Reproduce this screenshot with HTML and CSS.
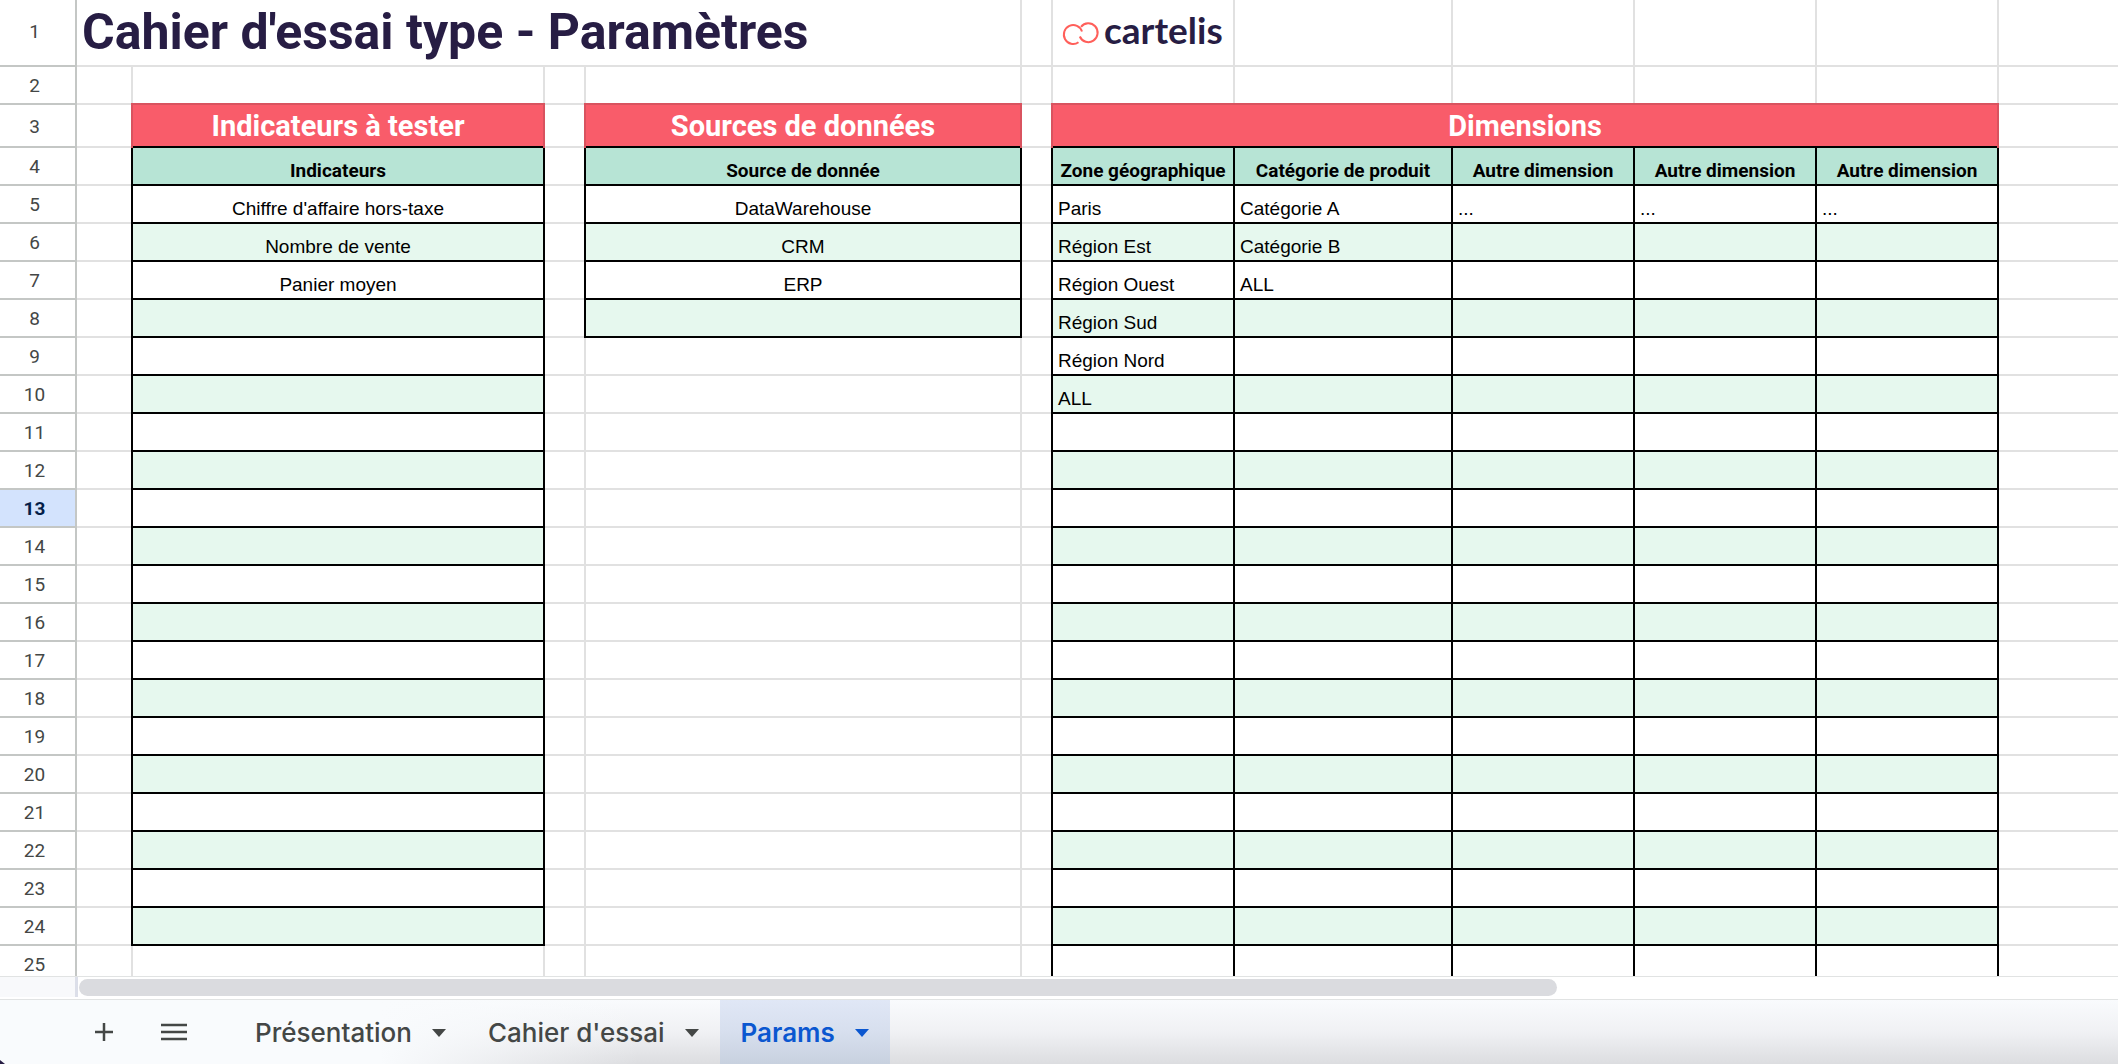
FILE: index.html
```html
<!DOCTYPE html>
<html lang="fr">
<head>
<meta charset="utf-8">
<title>Cahier d'essai type - Paramètres</title>
<link rel="stylesheet" href="styles.css">
</head>
<body>
<main class="sheet">
<table class="grid">
<colgroup>
<col class="w-num"><col class="w-a"><col class="w-b"><col class="w-c"><col class="w-d"><col class="w-e">
<col class="w-dim"><col class="w-cat"><col class="w-dim"><col class="w-dim"><col class="w-dim"><col>
</colgroup>
<tbody class="top">
<tr class="row-title"><th>1</th><td class="title" colspan="4">Cahier d'essai type - Paramètres</td><td></td>
<td class="logo-cell"><svg class="logo" viewBox="0 -3 168 48" role="img" aria-label="cartelis"><g fill="none" stroke="#ff5f5a" stroke-width="2"><path d="M16.500 30.300 A9.300 9.500 0 1 1 20 19.500"/><path d="M19 14.800 A9.300 9.500 0 1 1 17.800 24.500"/></g><text class="logo-text" x="42" y="32">cartelis</text></svg></td>
<td></td><td></td><td></td><td></td><td></td></tr>
<tr><th>2</th><td></td><td></td><td></td><td></td><td></td><td></td><td></td><td></td><td></td><td></td><td></td></tr>
<tr class="row-band"><th>3</th><td></td><td class="band">Indicateurs à tester</td><td></td><td class="band">Sources de données</td><td></td><td class="band" colspan="5">Dimensions</td><td></td></tr>
<tr class="row-head"><th>4</th><td></td><td>Indicateurs</td><td></td><td>Source de donnée</td><td></td><td>Zone géographique</td><td>Catégorie de produit</td><td>Autre dimension</td><td>Autre dimension</td><td>Autre dimension</td><td></td></tr>
</tbody>
<tbody class="data">
<tr><th>5</th><td></td><td>Chiffre d'affaire hors-taxe</td><td></td><td>DataWarehouse</td><td></td><td>Paris</td><td>Catégorie A</td><td>...</td><td>...</td><td>...</td><td></td></tr>
<tr><th>6</th><td></td><td>Nombre de vente</td><td></td><td>CRM</td><td></td><td>Région Est</td><td>Catégorie B</td><td></td><td></td><td></td><td></td></tr>
<tr><th>7</th><td></td><td>Panier moyen</td><td></td><td>ERP</td><td></td><td>Région Ouest</td><td>ALL</td><td></td><td></td><td></td><td></td></tr>
<tr><th>8</th><td></td><td></td><td></td><td></td><td></td><td>Région Sud</td><td></td><td></td><td></td><td></td><td></td></tr>
<tr><th>9</th><td></td><td></td><td></td><td></td><td></td><td>Région Nord</td><td></td><td></td><td></td><td></td><td></td></tr>
<tr><th>10</th><td></td><td></td><td></td><td></td><td></td><td>ALL</td><td></td><td></td><td></td><td></td><td></td></tr>
<tr><th>11</th><td></td><td></td><td></td><td></td><td></td><td></td><td></td><td></td><td></td><td></td><td></td></tr>
<tr><th>12</th><td></td><td></td><td></td><td></td><td></td><td></td><td></td><td></td><td></td><td></td><td></td></tr>
<tr><th class="current">13</th><td></td><td></td><td></td><td></td><td></td><td></td><td></td><td></td><td></td><td></td><td></td></tr>
<tr><th>14</th><td></td><td></td><td></td><td></td><td></td><td></td><td></td><td></td><td></td><td></td><td></td></tr>
<tr><th>15</th><td></td><td></td><td></td><td></td><td></td><td></td><td></td><td></td><td></td><td></td><td></td></tr>
<tr><th>16</th><td></td><td></td><td></td><td></td><td></td><td></td><td></td><td></td><td></td><td></td><td></td></tr>
<tr><th>17</th><td></td><td></td><td></td><td></td><td></td><td></td><td></td><td></td><td></td><td></td><td></td></tr>
<tr><th>18</th><td></td><td></td><td></td><td></td><td></td><td></td><td></td><td></td><td></td><td></td><td></td></tr>
<tr><th>19</th><td></td><td></td><td></td><td></td><td></td><td></td><td></td><td></td><td></td><td></td><td></td></tr>
<tr><th>20</th><td></td><td></td><td></td><td></td><td></td><td></td><td></td><td></td><td></td><td></td><td></td></tr>
<tr><th>21</th><td></td><td></td><td></td><td></td><td></td><td></td><td></td><td></td><td></td><td></td><td></td></tr>
<tr><th>22</th><td></td><td></td><td></td><td></td><td></td><td></td><td></td><td></td><td></td><td></td><td></td></tr>
<tr><th>23</th><td></td><td></td><td></td><td></td><td></td><td></td><td></td><td></td><td></td><td></td><td></td></tr>
<tr><th>24</th><td></td><td></td><td></td><td></td><td></td><td></td><td></td><td></td><td></td><td></td><td></td></tr>
<tr><th>25</th><td></td><td></td><td></td><td></td><td></td><td></td><td></td><td></td><td></td><td></td><td></td></tr>
</tbody>
</table>
</main>
<div class="scroll"><div class="scroll-corner"></div><div class="scroll-track"><div class="scroll-thumb"></div></div></div>
<footer class="tabs">
<button class="icon-btn" aria-label="Ajouter une feuille"><svg width="20" height="20" viewBox="0 0 20 20"><path d="M10 1V19M1 10H19" stroke="currentColor" stroke-width="2.500" fill="none"/></svg></button>
<button class="icon-btn menu" aria-label="Toutes les feuilles"><svg width="26" height="18" viewBox="0 0 26 18"><path d="M0 2H26M0 9H26M0 16H26" stroke="currentColor" stroke-width="2.500" fill="none"/></svg></button>
<button class="tab">Présentation<svg width="14" height="8" viewBox="0 0 14 8"><path d="M0 0H14L7 8Z" fill="currentColor"/></svg></button>
<button class="tab">Cahier d'essai<svg width="14" height="8" viewBox="0 0 14 8"><path d="M0 0H14L7 8Z" fill="currentColor"/></svg></button>
<button class="tab active">Params<svg width="14" height="8" viewBox="0 0 14 8"><path d="M0 0H14L7 8Z" fill="currentColor"/></svg></button>
</footer>
</body>
</html>
```
FILE: styles.css
```css
* { box-sizing: border-box; }

body {
  margin: 0;
  height: 100vh;
  display: flex;
  flex-direction: column;
  overflow: hidden;
  background: #fff;
  color: #000;
  font-family: "Liberation Sans", Arial, sans-serif;
}

.sheet { flex: 1; min-height: 0; overflow: hidden; }

.grid {
  width: 100%;
  table-layout: fixed;
  border-collapse: separate;
  border-spacing: 0;
}

.w-num { width: 77px; }
.w-a { width: 56px; }
.w-b { width: 412px; }
.w-c { width: 41px; }
.w-d { width: 436px; }
.w-e { width: 31px; }
.w-dim { width: 182px; }
.w-cat { width: 218px; }

.grid tr { height: 38px; }
.grid .row-title { height: 67px; }
.grid .row-band { height: 43px; }

/* Vertical lines are borders, horizontal lines are inset shadows,
   so that lines of two colours meet without a mitred corner */
.grid th,
.grid td {
  padding: 0;
  border: 0 solid #e1e1e1;
  border-right-width: 2px;
  box-shadow: inset 0 -2px #e1e1e1;
  white-space: nowrap;
}

.grid th {
  padding: 0 6px 0 0;
  border-color: #c4c7c5;
  box-shadow: inset 0 -2px #c4c7c5;
  color: #444746;
  font: 400 19px/22px Roboto, sans-serif;
  text-align: center;
  vertical-align: middle;
}

.grid th.current { background: #d3e3fd; color: #041e49; font-weight: 700; }

.grid .row-title th { padding-bottom: 4px; }

.grid td {
  padding: 0 5px 4px;
  font-size: 19px;
  line-height: 22px;
  vertical-align: bottom;
}

.grid td:last-child { border-right: 0; }

.grid .title {
  padding: 0 5px 3px;
  color: #271d44;
  font: 700 50px/60px Roboto, sans-serif;
  vertical-align: middle;
}

.grid .logo-cell { padding: 0 0 2px 9px; vertical-align: middle; }
.logo { display: block; width: 168px; height: 48px; overflow: visible; }
.logo-text { font: 700 37px Lato, sans-serif; fill: #271d44; }

.grid .band {
  padding: 0 0 2px;
  background: #f95c6a;
  border-color: #d9535f;
  box-shadow:
    inset 0 -2px #000,
    0 -2px #d9535f,
    -2px 0 #d9535f,
    -2px -2px #d9535f;
  color: #fff;
  font: 700 29px/34px Roboto, sans-serif;
  text-align: center;
  vertical-align: middle;
}

/* Framed cells: column B, column D and the five dimension columns */
.row-head td:nth-child(n+2):nth-child(-n+11) { border-right-color: #000; }
.row-head td:nth-child(3),
.row-head td:nth-child(5),
.row-head td:nth-child(n+7):nth-child(-n+11) {
  padding: 0 0 4px;
  background: #b7e4d5;
  box-shadow: inset 0 -2px #000;
  font: 700 19px/22px Roboto, sans-serif;
  text-align: center;
}

.data td:nth-child(3),
.data td:nth-child(5) { text-align: center; }

.data tr:nth-child(-n+20) td:nth-child(2),
.data tr:nth-child(-n+20) td:nth-child(3),
.data tr:nth-child(-n+4) td:nth-child(4),
.data tr:nth-child(-n+4) td:nth-child(5),
.data td:nth-child(n+6):nth-child(-n+11) { border-right-color: #000; }

.data tr:nth-child(-n+20) td:nth-child(3),
.data tr:nth-child(-n+4) td:nth-child(5),
.data td:nth-child(n+7):nth-child(-n+11) { box-shadow: inset 0 -2px #000; }

.data tr:nth-child(even) td:nth-child(3),
.data tr:nth-child(even):nth-child(-n+4) td:nth-child(5),
.data tr:nth-child(even) td:nth-child(n+7):nth-child(-n+11) { background: #e6f8ee; }

.scroll {
  display: flex;
  height: 24px;
  border: solid #e1e3e3;
  border-width: 1px 0;
}
.scroll-corner { width: 78px; margin-bottom: 2px; background: #f8f9fb; border-right: 3px solid #dcdfe9; }
.scroll-track { flex: 1; padding: 2px 1px; }
.scroll-thumb { width: 72.5%; height: 17px; border-radius: 9px; background: #dadbdf; }

.tabs {
  position: relative;
  display: flex;
  align-items: stretch;
  height: 64px;
  padding-left: 84px;
  background:
    linear-gradient(to right, #f9fbfd 380px, transparent 640px),
    linear-gradient(#f9fbfd, #f0f1f4 50%, #dcdde0);
}
.tabs::after {
  content: "";
  position: absolute;
  left: 0;
  bottom: 0;
  border: solid transparent;
  border-width: 4px 0 0 5px;
  border-left-color: #271d44;
}

.tabs button {
  display: flex;
  align-items: center;
  margin: 0;
  padding: 0;
  border: 0;
  background: none;
  color: #444746;
  font: 500 26px/30px Inter, sans-serif;
}
.tabs .icon-btn { width: 40px; justify-content: center; }
.tabs .menu { margin: 0 40px 0 30px; }
.tabs .tab { gap: 20px; padding: 2px 21px 0; }
.tabs .active {
  background: linear-gradient(#e0e7f6, #d7dfee 50%, #c8d1df);
  color: #0b57d0;
  font-weight: 600;
}
```
